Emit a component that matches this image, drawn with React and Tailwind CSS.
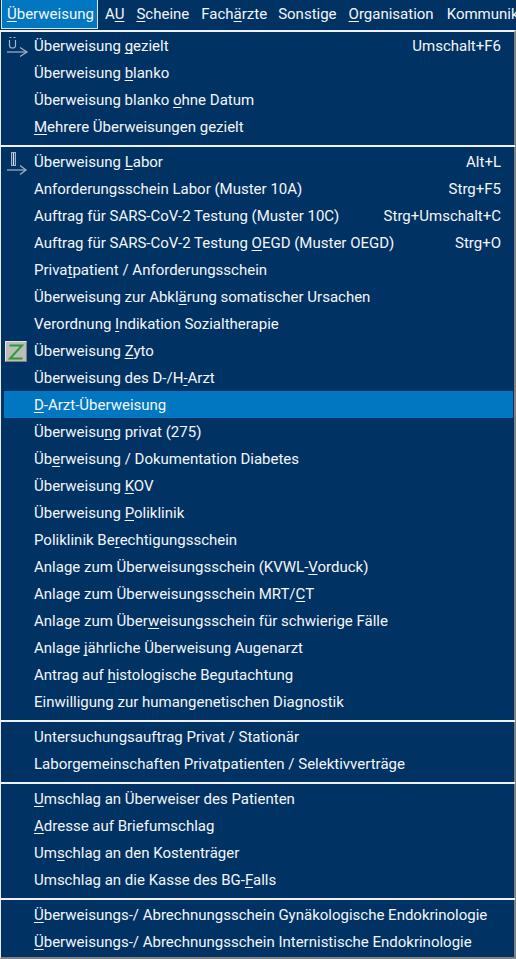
const U = ({ children }) => (
  <span className="underline underline-offset-[2px] decoration-1 [text-decoration-skip-ink:none]">{children}</span>
);

const LetterArrow = ({ variant }) => (
  <svg width="24" height="27" viewBox="0 0 24 27" fill="none" className="block">
    {variant === "u" ? (
      <g stroke="#a3b5c8" strokeWidth="1.2">
        <path d="M4.5 7V12.5Q4.5 15 7.5 15Q10.5 15 10.5 12.5V7" />
        <path d="M4.5 4.5H6.5M8.5 4.5H10.5" />
      </g>
    ) : (
      <g stroke="#a3b5c8" strokeWidth="1">
        <rect x="6.5" y="3.5" width="4" height="13" />
        <path d="M8.5 4V16" stroke="#d5dde6" strokeWidth="1.4" />
      </g>
    )}
    <g stroke="#a3b5c8" strokeWidth="1.2">
      <path d={variant === "u" ? "M2 19H22" : "M2 21H21"} />
      <path d={variant === "u" ? "M15 14.5L22 19L15 23.5" : "M15 16.5L21 21L15 25.5"} />
    </g>
  </svg>
);

const ZIcon = () => (
  <div className="w-[22px] h-[21px] bg-[#b9bfb8] border border-t-[#e2e6e1] border-l-[#e2e6e1] border-r-[#7b807b] border-b-[#7b807b] flex items-center justify-center">
    <svg width="16" height="16" viewBox="0 0 16 16" fill="none">
      <path d="M1.5 1.5H14L2 14.5H14.5" stroke="#2f9a3a" strokeWidth="2" />
    </svg>
  </div>
);

const Row = ({ icon, iconClass = "left-[1px] top-[1px]", shortcut, selected, children }) => (
  <div className={`h-[27px] flex items-center ml-[3px] mr-[1px] pl-[30px] pr-[12px] justify-between relative ${selected ? "bg-[#0077c0]" : ""}`}>
    {icon && <div className={`absolute ${iconClass}`}>{icon}</div>}
    <span className="whitespace-nowrap">{children}</span>
    {shortcut && <span className="whitespace-nowrap">{shortcut}</span>}
  </div>
);

const Sep = () => <div className="h-[2px] bg-[#f0f0f0] mt-[5px] mb-[1px] -mr-[1px]" />;

const Top = ({ children, className = "" }) => <div className={`whitespace-nowrap ${className}`}>{children}</div>;

export default function App() {
  return (
    <div className="w-[516px] h-[959px] overflow-hidden bg-[#003264] text-[#f4f6f8] text-[15px] leading-[20px] font-['Roboto',sans-serif] flex flex-col">
      <div className="h-[30px] flex items-start shrink-0 overflow-hidden">
        <Top className="ml-[1px] h-[29px] w-[97px] shrink-0 bg-[#0077c0] border-l border-r border-b border-[#dbe6ee] pl-[5px] pt-[4px]"><U>Ü</U>berweisung</Top>
        <Top className="ml-[7px] pt-[4px]">A<U>U</U></Top>
        <Top className="ml-[12px] pt-[4px]"><U>S</U>cheine</Top>
        <Top className="ml-[12px] pt-[4px]">Fach<U>ä</U>rzte</Top>
        <Top className="ml-[11px] pt-[4px]">Sonstige</Top>
        <Top className="ml-[12px] pt-[4px]"><U>O</U>rganisation</Top>
        <Top className="ml-[13px] pt-[4px]">Kommunikation</Top>
      </div>
      <div className="flex-1 min-h-0 border-t-2 border-t-[#f0f0f0] border-l border-l-[#e8edf2] border-r-2 border-r-[#808080] border-b-2 border-b-[#808080]">
        <Row icon={<LetterArrow variant="u" />} shortcut="Umschalt+F6">Überweisung <U>g</U>ezielt</Row>
        <Row>Überweisung <U>b</U>lanko</Row>
        <Row>Überweisung blanko <U>o</U>hne Datum</Row>
        <Row><U>M</U>ehrere Überweisungen gezielt</Row>
        <Sep />
        <Row icon={<LetterArrow variant="l" />} shortcut="Alt+L">Überweisung <U>L</U>abor</Row>
        <Row shortcut="Strg+F5">Anforderungsschein Labor (Muster 10A)</Row>
        <Row shortcut="Strg+Umschalt+C">Auftrag für SARS-CoV-2 Testung (Muster 10C)</Row>
        <Row shortcut="Strg+O">Auftrag für SARS-CoV-2 Testung <U>O</U>EGD (Muster OEGD)</Row>
        <Row>Priva<U>t</U>patient / Anforderungsschein</Row>
        <Row>Überweisung zur Abkl<U>ä</U>rung somatischer Ursachen</Row>
        <Row>Verordnung <U>I</U>ndikation Sozialtherapie</Row>
        <Row icon={<ZIcon />} iconClass="left-[1px] top-[4px]">Überweisung <U>Z</U>yto</Row>
        <Row>Überweisung des D-/H<U>-</U>Arzt</Row>
        <Row selected><U>D</U>-Arzt-Überweisung</Row>
        <Row>Überweisu<U>n</U>g privat (275)</Row>
        <Row>Üb<U>e</U>rweisung / Dokumentation Diabetes</Row>
        <Row>Überweisung <U>K</U>OV</Row>
        <Row>Überweisung <U>P</U>oliklinik</Row>
        <Row>Poliklinik Be<U>r</U>echtigungsschein</Row>
        <Row>Anlage zum Überweisungsschein (KVWL-<U>V</U>orduck)</Row>
        <Row>Anlage zum Überweisungsschein MRT/<U>C</U>T</Row>
        <Row>Anlage zum Über<U>w</U>eisungsschein für schwierige Fälle</Row>
        <Row>Anlage <U>j</U>ährliche Überweisung Augenarzt</Row>
        <Row>Antrag auf <U>h</U>istologische Begutachtung</Row>
        <Row>Einwilligung zur humangenetischen Diagnostik</Row>
        <Sep />
        <Row>Untersuchungsauftrag Privat / Stationär</Row>
        <Row>Laborgemeinschaften Privatpatienten / Selektivverträge</Row>
        <Sep />
        <Row><U>U</U>mschlag an Überweiser des Patienten</Row>
        <Row><U>A</U>dresse auf Briefumschlag</Row>
        <Row>Um<U>s</U>chlag an den Kostenträger</Row>
        <Row>Umschlag an die Kasse des BG-<U>F</U>alls</Row>
        <Sep />
        <Row><U>Ü</U>berweisungs-/ Abrechnungsschein Gynäkologische Endokrinologie</Row>
        <Row><U>Ü</U>berweisungs-/ Abrechnungsschein Internistische Endokrinologie</Row>
      </div>
    </div>
  );
}
